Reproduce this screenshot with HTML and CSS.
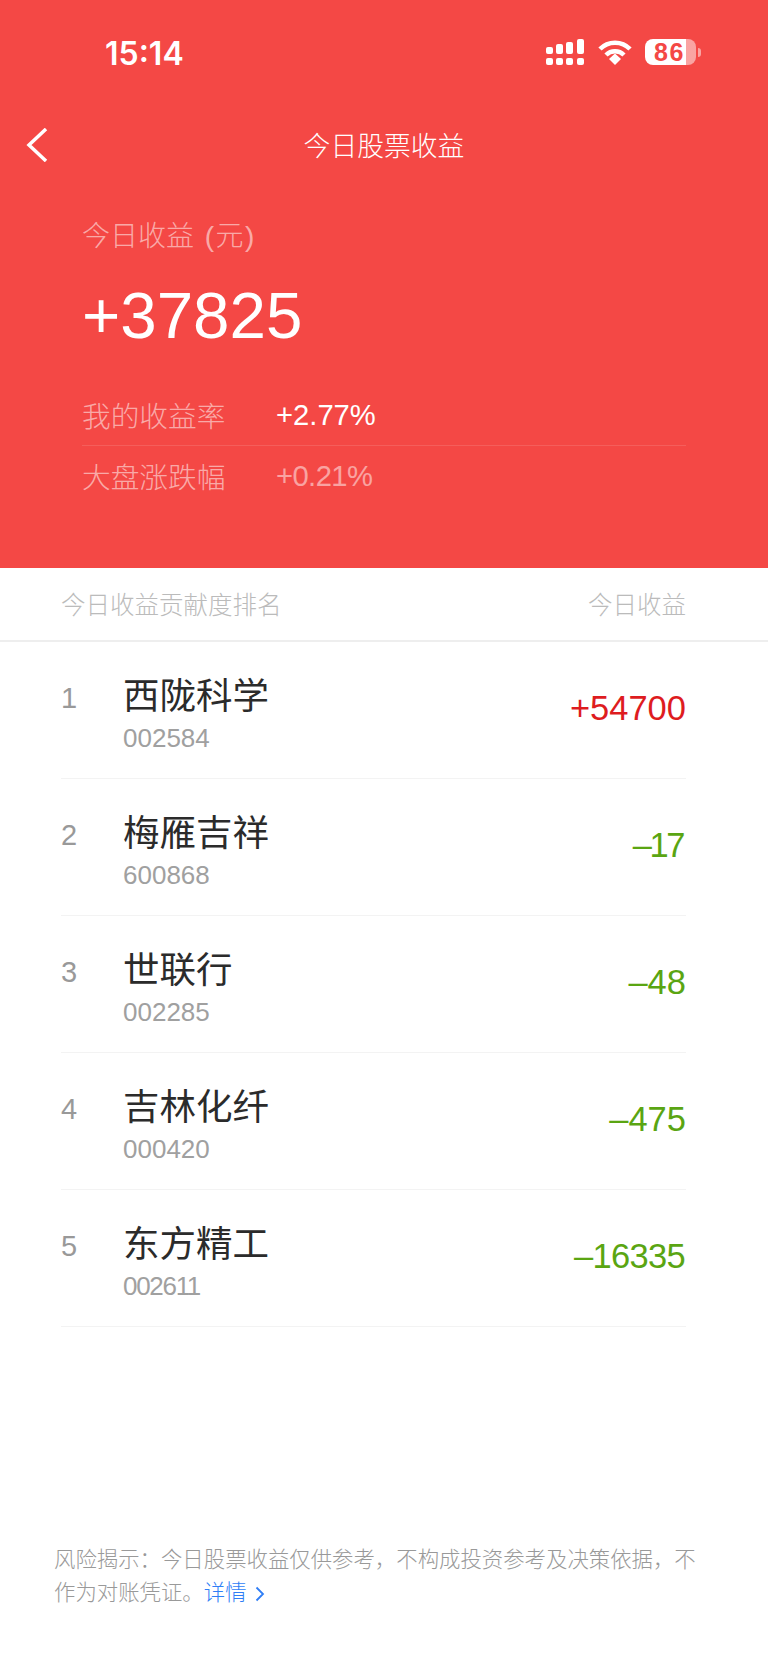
FILE: index.html
```html
<!DOCTYPE html>
<html lang="zh-CN">
<head>
    <meta charset="UTF-8">
    <meta name="viewport" content="width=device-width, initial-scale=1.0">
    <title>今日股票收益</title>
    <link rel="stylesheet" href="styles.css">
</head>
<body>
    <div class="page">
        <div class="hero">
            <div class="status-bar">
                <span class="time">15:14</span>
                <div class="status-icons">
                    <svg class="signal" width="38" height="26" viewBox="0 0 38 26" fill="#fff">
                        <rect x="0" y="8" width="7" height="7" rx="2"/>
                        <rect x="10" y="5" width="7" height="10" rx="2"/>
                        <rect x="20" y="3" width="7" height="12" rx="2"/>
                        <rect x="31" y="0" width="7" height="15" rx="2"/>
                        <rect x="0" y="19" width="7" height="7" rx="2"/>
                        <rect x="10" y="19" width="7" height="7" rx="2"/>
                        <rect x="20" y="19" width="7" height="7" rx="2"/>
                        <rect x="31" y="19" width="7" height="7" rx="2"/>
                    </svg>
                    <svg class="wifi" width="34" height="26" viewBox="0 0 34 26" fill="none" stroke="#fff" stroke-width="4.5">
                        <path d="M2 10 C10 1.500 24 1.500 32 10"/>
                        <path d="M8 16 C13 11 21 11 26 16"/>
                        <path d="M11 20 L17 14.500 L23 20 L17 26 Z" fill="#fff" stroke="none"/>
                    </svg>
                    <div class="battery"><span>86</span></div>
                    <div class="battery-nib"></div>
                </div>
            </div>
            <div class="nav-bar">
                <svg class="back" width="22" height="34" viewBox="0 0 22 34" fill="none" stroke="#fff" stroke-width="3.500">
                    <path d="M20 1 L3 17 L20 33"/>
                </svg>
                <span class="nav-title">今日股票收益</span>
            </div>
            <div class="summary">
                <div class="summary-label">今日收益 <span class="unit">(元)</span></div>
                <div class="summary-value">+37825</div>
                <div class="stat stat-line">
                    <span class="stat-name">我的收益率</span>
                    <span class="stat-value">+2.77%</span>
                </div>
                <div class="stat">
                    <span class="stat-name">大盘涨跌幅</span>
                    <span class="stat-value dim track-s">+0.21%</span>
                </div>
            </div>
        </div>

        <div class="rank-head">
            <span>今日收益贡献度排名</span>
            <span>今日收益</span>
        </div>

        <div class="rank-list">
            <div class="rank-row">
                <span class="rank-num">1</span>
                <div class="stock">
                    <div class="stock-name">西陇科学</div>
                    <div class="stock-code">002584</div>
                </div>
                <span class="gain up">+54700</span>
            </div>
            <div class="rank-row">
                <span class="rank-num">2</span>
                <div class="stock">
                    <div class="stock-name">梅雁吉祥</div>
                    <div class="stock-code">600868</div>
                </div>
                <span class="gain down track-l">–17</span>
            </div>
            <div class="rank-row">
                <span class="rank-num">3</span>
                <div class="stock">
                    <div class="stock-name">世联行</div>
                    <div class="stock-code">002285</div>
                </div>
                <span class="gain down">–48</span>
            </div>
            <div class="rank-row">
                <span class="rank-num">4</span>
                <div class="stock">
                    <div class="stock-name">吉林化纤</div>
                    <div class="stock-code">000420</div>
                </div>
                <span class="gain down">–475</span>
            </div>
            <div class="rank-row">
                <span class="rank-num">5</span>
                <div class="stock">
                    <div class="stock-name">东方精工</div>
                    <div class="stock-code track-m">002611</div>
                </div>
                <span class="gain down track-s">–16335</span>
            </div>
        </div>

        <div class="risk">
            风险揭示&#65306;今日股票收益仅供参考&#65292;不构成投资参考及决策依据&#65292;不作为对账凭证。<span class="more">详情<svg class="more-arrow" width="10" height="16" viewBox="0 0 10 16" fill="none" stroke="#2f7ef6" stroke-width="1.800"><path d="M1.500 1.500 L8 8 L1.500 14.500"/></svg></span>
        </div>
    </div>
</body>
</html>
```

FILE: styles.css
```css
* {
    box-sizing: border-box;
}
body {
    margin: 0;
    background: #fff;
    font-family: "Liberation Sans", "Noto Sans CJK SC", sans-serif;
}
.page {
    width: 768px;
    height: 1665px;
    display: flex;
    flex-direction: column;
}
.hero {
    height: 568px;
    background: #f44845;
    color: #fff;
}
.status-bar {
    height: 106px;
    padding: 0 67px 2px 105px;
    display: flex;
    justify-content: space-between;
    align-items: center;
}
.time {
    font-family: "Inter", sans-serif;
    font-size: 32px;
    font-weight: 600;
    margin-top: 2px;
}
.status-icons {
    display: flex;
    align-items: center;
}
.signal {
    margin-right: 14px;
}
.wifi {
    margin-right: 13px;
}
.battery {
    width: 51px;
    height: 26px;
    border-radius: 8px;
    background: linear-gradient(to right, #fff 80%, rgba(255, 255, 255, 0.5) 80%);
    color: #f44845;
    font-size: 25px;
    font-weight: 700;
    letter-spacing: 1.500px;
    line-height: 26px;
    padding-left: 9px;
}
.battery-nib {
    width: 3px;
    height: 9px;
    margin-left: 2px;
    border-radius: 0 3px 3px 0;
    background: rgba(255, 255, 255, 0.5);
}
.nav-bar {
    height: 76px;
    display: flex;
    align-items: center;
    justify-content: center;
    position: relative;
}
.back {
    position: absolute;
    left: 26px;
    top: 22px;
}
.nav-title {
    font-size: 26.800px;
    font-weight: 300;
}
.summary {
    padding: 35px 82px 0 82px;
}
.summary-label {
    font-size: 28px;
    font-weight: 300;
    line-height: 40px;
    color: rgba(255, 255, 255, 0.55);
}
.unit {
    margin-left: 3px;
    letter-spacing: 1.500px;
}
.summary-value {
    font-size: 65.500px;
    line-height: 80px;
    margin-top: 19px;
}
.stat {
    display: flex;
    align-items: center;
    height: 61px;
    font-size: 29.200px;
}
.summary-value + .stat {
    margin-top: 29px;
}
.stat-line {
    border-bottom: 1px solid rgba(255, 255, 255, 0.12);
}
.stat-name {
    width: 194px;
    margin-top: -2px;
    font-size: 28.700px;
    font-weight: 300;
    color: rgba(255, 255, 255, 0.55);
}
.dim {
    color: rgba(255, 255, 255, 0.5);
}
.track-s {
    letter-spacing: -0.02em;
    margin-right: 1px;
}
.track-m {
    letter-spacing: -0.05em;
}
.track-l {
    letter-spacing: -0.07em;
    margin-right: 3px;
}
.rank-head {
    height: 74px;
    padding: 0 82px 2px 61px;
    display: flex;
    justify-content: space-between;
    align-items: center;
    font-size: 24.500px;
    font-weight: 300;
    color: #bbb;
    border-bottom: 2px solid #eeeeee;
}
.rank-list {
    padding: 0 82px 0 61px;
}
.rank-row {
    height: 137px;
    display: flex;
    align-items: center;
    border-bottom: 1px solid #f3f3f3;
}
.rank-num {
    width: 62px;
    font-size: 29px;
    color: #999;
    margin-top: -24px;
}
.stock {
    flex: 1;
    padding-top: 5px;
}
.stock-name {
    font-size: 36.500px;
    line-height: 50px;
    color: #2b2b2b;
}
.stock-code {
    font-size: 26px;
    line-height: 32px;
    color: #a0a0a0;
}
.gain {
    font-size: 34.500px;
    margin-top: -4px;
}
.up {
    color: #de1c1f;
}
.down {
    color: #5aa512;
}
.risk {
    margin-top: 217px;
    padding: 0 60px 0 54px;
    font-size: 21.400px;
    font-weight: 300;
    line-height: 33px;
    color: #999;
}
.more {
    color: #2f7ef6;
}
.more-arrow {
    margin-left: 8px;
    vertical-align: -2px;
}
```
